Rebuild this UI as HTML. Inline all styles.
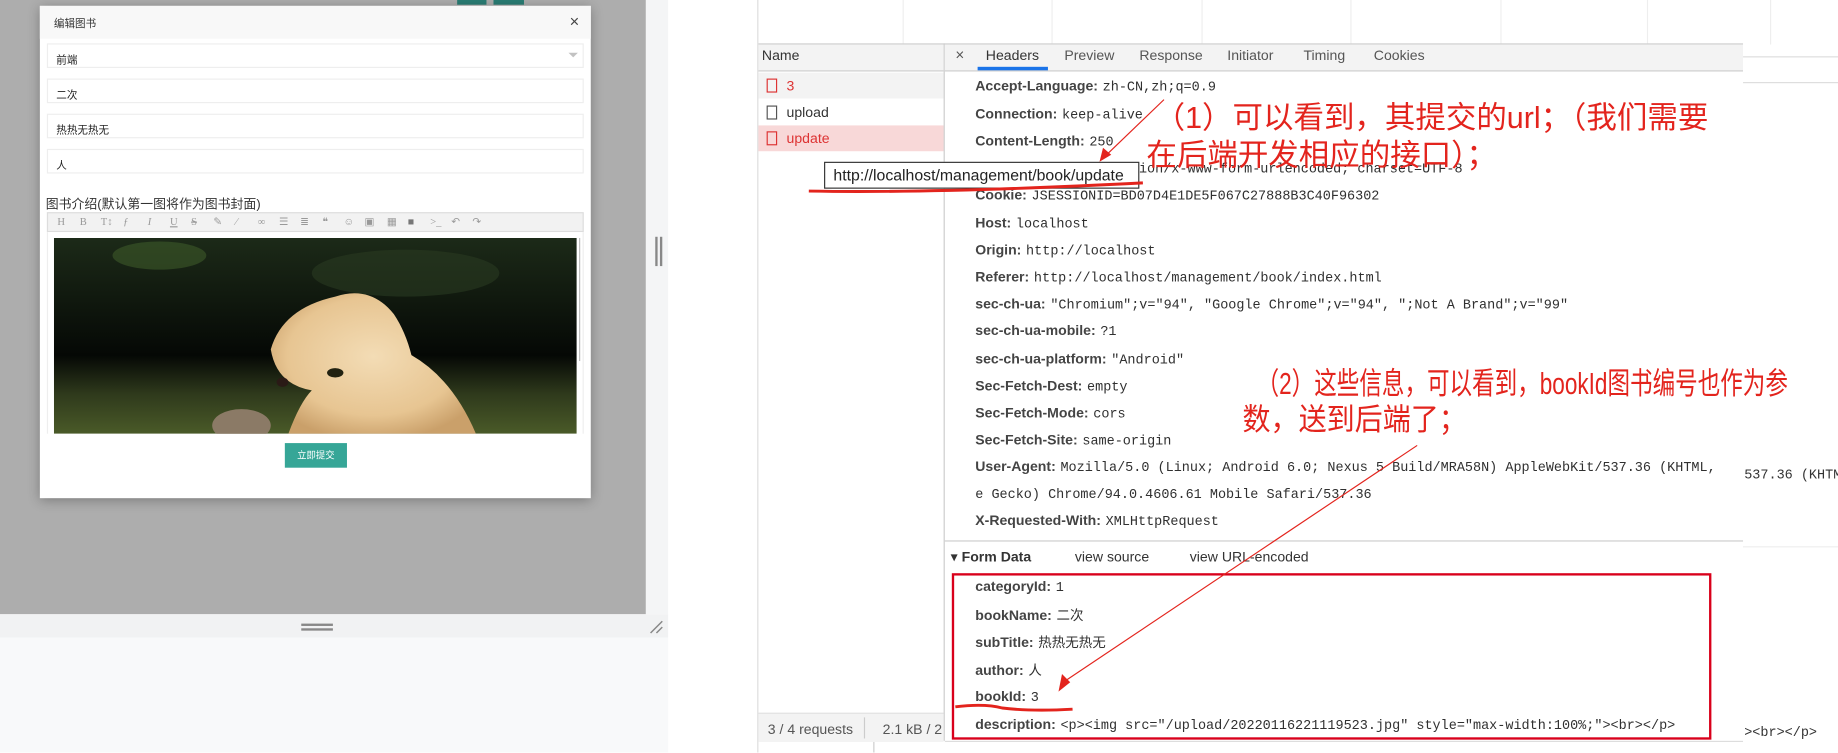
<!DOCTYPE html>
<html><head><meta charset="utf-8">
<style>
*{margin:0;padding:0;box-sizing:border-box}
html,body{width:1838px;height:753px;overflow:hidden;background:#fff}
#w{position:absolute;left:0;top:0;width:1568px;height:642px;transform:scale(1.17219);transform-origin:0 0;font-family:"Liberation Sans","Noto Sans CJK SC",sans-serif;overflow:hidden;background:#fff}
.a{position:absolute}
.t{position:absolute;white-space:nowrap}
.inp{position:absolute;left:40px;width:458px;height:21px;background:#fff;border:1px solid #eee;font-size:9px;color:#222;padding:6px 0 0 7px}
.hl{position:absolute;left:832px;font-size:12px;white-space:nowrap;color:#303030}
.hl b{font-weight:bold;color:#444}
.hl span{font-family:"Liberation Mono","Noto Sans CJK SC",monospace;font-size:11.5px;margin-left:4px}
.red{color:#e3241d;font-family:"Liberation Sans","Noto Sans CJK SC",sans-serif;font-size:26px;position:absolute;white-space:nowrap;transform-origin:0 0}
.tb{position:absolute;top:184px;font-size:9px;color:#999;font-family:"Liberation Serif",serif}
</style></head><body><div id="w">
<div class="a" style="left:0;top:0;width:551px;height:524px;background:#adadad"></div>
<div class="a" style="left:390px;top:0;width:25px;height:4px;background:#2a7d74"></div>
<div class="a" style="left:421px;top:0;width:26px;height:4px;background:#2a7d74"></div>
<div class="a" style="left:0;top:524px;width:570px;height:20px;background:#f1f2f3"></div>
<div class="a" style="left:551px;top:0;width:19px;height:524px;background:#f4f5f6"></div>
<div class="a" style="left:257px;top:532px;width:27px;height:1.5px;background:#888"></div>
<div class="a" style="left:257px;top:536px;width:27px;height:1.5px;background:#888"></div>
<div class="a" style="left:559px;top:202px;width:1.5px;height:25px;background:#888"></div>
<div class="a" style="left:563px;top:202px;width:1.5px;height:25px;background:#888"></div>
<svg class="a" style="left:553px;top:528px" width="14" height="14"><path d="M2 12L12 2M7 12L12 7" stroke="#888" stroke-width="1.3"/></svg>
<div class="a" style="left:0;top:544px;width:570px;height:98px;background:#f8f9fa"></div>
<div class="a" style="left:34px;top:5px;width:470px;height:420px;background:#fff;box-shadow:0 2px 10px rgba(0,0,0,.3)"></div>
<div class="a" style="left:34px;top:5px;width:470px;height:28px;background:#f8f8f8"></div>
<div class="t" style="left:46px;top:13px;font-size:9px;color:#333">编辑图书</div>
<div class="t" style="left:486px;top:10px;font-size:14px;color:#444">×</div>
<div class="inp" style="top:37px">前端</div>
<div class="a" style="left:485px;top:45px;border:4px solid transparent;border-top:4px solid #c2c2c2"></div>
<div class="inp" style="top:67px">二次</div>
<div class="inp" style="top:97px">热热无热无</div>
<div class="inp" style="top:127px">人</div>
<div class="t" style="left:39px;top:166px;font-size:11px;color:#333">图书介绍(默认第一图将作为图书封面)</div>
<div class="a" style="left:40px;top:181px;width:458px;height:17px;background:#f2f2f2;border:1px solid #ddd"></div>
<div class="tb" style="left:49px">H</div><div class="tb" style="left:68px">B</div><div class="tb" style="left:86px">T↕</div><div class="tb" style="left:105px;font-style:italic">ƒ</div><div class="tb" style="left:126px;font-style:italic">I</div><div class="tb" style="left:145px;text-decoration:underline">U</div><div class="tb" style="left:163px;text-decoration:line-through">S</div><div class="tb" style="left:182px">✎</div><div class="tb" style="left:201px">⁄</div><div class="tb" style="left:220px">∞</div><div class="tb" style="left:238px">☰</div><div class="tb" style="left:256px">≣</div><div class="tb" style="left:275px">❝</div><div class="tb" style="left:293px">☺</div><div class="tb" style="left:311px">▣</div><div class="tb" style="left:330px">▦</div><div class="tb" style="left:348px;color:#777">■</div><div class="tb" style="left:367px">&gt;_</div><div class="tb" style="left:385px">↶</div><div class="tb" style="left:403px">↷</div>
<div class="a" style="left:40px;top:198px;width:458px;height:172px;background:#fff;border-left:1px solid #eee;border-right:1px solid #eee"></div>
<div class="a" style="left:494px;top:203px;width:1px;height:105px;background:#bbb"></div>
<svg class="a" style="left:46px;top:203px" width="446" height="167">
<defs><linearGradient id="g" x1="0" y1="0" x2="0" y2="1"><stop offset="0" stop-color="#1c2a18"/><stop offset=".6" stop-color="#050805"/><stop offset=".8" stop-color="#2f3a1c"/><stop offset="1" stop-color="#4a5a28"/></linearGradient>
<radialGradient id="d" cx=".5" cy=".45" r=".6"><stop offset="0" stop-color="#f3dcb5"/><stop offset=".7" stop-color="#e7c592"/><stop offset="1" stop-color="#caa06a"/></radialGradient></defs>
<rect width="446" height="167" fill="url(#g)"/>
<ellipse cx="90" cy="15" rx="40" ry="12" fill="#3d5a2a" opacity=".6"/>
<ellipse cx="300" cy="30" rx="80" ry="20" fill="#2a3a22" opacity=".6"/>
<path d="M185 95 Q195 60 240 50 Q270 40 290 65 Q300 80 305 100 Q340 120 360 167 L200 167 Q210 140 220 130 Q190 125 185 95Z" fill="url(#d)"/>
<ellipse cx="240" cy="115" rx="7" ry="4" fill="#221"/>
<ellipse cx="195" cy="123" rx="5" ry="4" fill="#2a1a16"/>
<ellipse cx="160" cy="160" rx="25" ry="14" fill="#8b7a66"/>
</svg>
<div class="t" style="left:243px;top:378px;width:53px;height:21px;background:#36a697;color:#fff;font-size:8px;text-align:center;line-height:21px">立即提交</div>
<div class="a" style="left:646px;top:0;width:1px;height:642px;background:#ddd"></div>
<div class="a" style="left:770px;top:0;width:1px;height:37px;background:#eee"></div>
<div class="a" style="left:897px;top:0;width:1px;height:37px;background:#eee"></div>
<div class="a" style="left:1025px;top:0;width:1px;height:37px;background:#eee"></div>
<div class="a" style="left:1152px;top:0;width:1px;height:37px;background:#eee"></div>
<div class="a" style="left:1280px;top:0;width:1px;height:37px;background:#eee"></div>
<div class="a" style="left:1405px;top:0;width:1px;height:37px;background:#eee"></div>
<div class="a" style="left:1510px;top:0;width:1px;height:48px;background:#eee"></div>
<div class="a" style="left:647px;top:37px;width:840px;height:1px;background:#ccc"></div>
<div class="a" style="left:647px;top:38px;width:158px;height:22px;background:#f3f3f3"></div>
<div class="t" style="left:650px;top:40px;font-size:12px;color:#333">Name</div>
<div class="a" style="left:647px;top:60px;width:158px;height:1px;background:#ccc"></div>
<div class="a" style="left:647px;top:62px;width:158px;height:22px;background:#f3f3f3"></div>
<div class="a" style="left:647px;top:107px;width:158px;height:22px;background:#f8d8d8"></div>
<div class="a" style="left:654px;top:67px;width:9px;height:12px;border:1px solid #d33"></div>
<div class="t" style="left:671px;top:66px;font-size:12px;color:#d33">3</div>
<div class="a" style="left:654px;top:90px;width:9px;height:12px;border:1px solid #555"></div>
<div class="t" style="left:671px;top:89px;font-size:12px;color:#333">upload</div>
<div class="a" style="left:654px;top:112px;width:9px;height:12px;border:1px solid #d33"></div>
<div class="t" style="left:671px;top:111px;font-size:12px;color:#d33">update</div>
<div class="a" style="left:805px;top:37px;width:1px;height:595px;background:#ccc"></div>
<div class="a" style="left:806px;top:38px;width:681px;height:22px;background:#f3f3f3"></div>
<div class="a" style="left:806px;top:60px;width:681px;height:1px;background:#ccc"></div>
<div class="t" style="left:815px;top:39px;font-size:13px;color:#555">×</div>
<div class="t" style="left:841px;top:40px;font-size:12px;color:#333">Headers</div>
<div class="a" style="left:834px;top:57px;width:60px;height:3px;background:#1a73e8"></div>
<div class="t" style="left:908px;top:40px;font-size:12px;color:#555">Preview</div>
<div class="t" style="left:972px;top:40px;font-size:12px;color:#555">Response</div>
<div class="t" style="left:1047px;top:40px;font-size:12px;color:#555">Initiator</div>
<div class="t" style="left:1112px;top:40px;font-size:12px;color:#555">Timing</div>
<div class="t" style="left:1172px;top:40px;font-size:12px;color:#555">Cookies</div>
<div class="hl" style="top:66px"><b>Accept-Language:</b><span>zh-CN,zh;q=0.9</span></div>
<div class="hl" style="top:90px"><b>Connection:</b><span>keep-alive</span></div>
<div class="hl" style="top:113px"><b>Content-Length:</b><span>250</span></div>
<div class="hl" style="top:136px"><b>Content-Type:</b><span>application/x-www-form-urlencoded; charset=UTF-8</span></div>
<div class="hl" style="top:159px"><b>Cookie:</b><span>JSESSIONID=BD07D4E1DE5F067C27888B3C40F96302</span></div>
<div class="hl" style="top:183px"><b>Host:</b><span>localhost</span></div>
<div class="hl" style="top:206px"><b>Origin:</b><span>http://localhost</span></div>
<div class="hl" style="top:229px"><b>Referer:</b><span>http://localhost/management/book/index.html</span></div>
<div class="hl" style="top:252px"><b>sec-ch-ua:</b><span>"Chromium";v="94", "Google Chrome";v="94", ";Not A Brand";v="99"</span></div>
<div class="hl" style="top:275px"><b>sec-ch-ua-mobile:</b><span>?1</span></div>
<div class="hl" style="top:299px"><b>sec-ch-ua-platform:</b><span>"Android"</span></div>
<div class="hl" style="top:322px"><b>Sec-Fetch-Dest:</b><span>empty</span></div>
<div class="hl" style="top:345px"><b>Sec-Fetch-Mode:</b><span>cors</span></div>
<div class="hl" style="top:368px"><b>Sec-Fetch-Site:</b><span>same-origin</span></div>
<div class="hl" style="top:391px"><b>User-Agent:</b><span>Mozilla/5.0 (Linux; Android 6.0; Nexus 5 Build/MRA58N) AppleWebKit/537.36 (KHTML,</span></div>
<div class="hl" style="top:414px"><span style="margin:0">e Gecko) Chrome/94.0.4606.61 Mobile Safari/537.36</span></div>
<div class="hl" style="top:437px"><b>X-Requested-With:</b><span>XMLHttpRequest</span></div>
<div class="a" style="left:1487px;top:38px;width:81px;height:604px;background:#fff"></div>
<div class="a" style="left:1487px;top:48px;width:81px;height:1px;background:#ddd"></div>
<div class="a" style="left:1487px;top:70px;width:81px;height:1px;background:#ddd"></div>
<div class="a" style="left:1487px;top:466px;width:81px;height:1px;background:#eee"></div>
<div class="t" style="left:1488px;top:399px;font-size:11.5px;font-family:'Liberation Mono',monospace;color:#333">537.36 (KHTM</div>
<div class="t" style="left:1488px;top:619px;font-size:11.5px;font-family:'Liberation Mono',monospace;color:#333">&gt;&lt;br&gt;&lt;/p&gt;</div>
<div class="a" style="left:806px;top:461px;width:681px;height:1px;background:#ccc"></div>
<div class="t" style="left:811px;top:468px;font-size:12px;color:#333">▾ <b>Form Data</b></div>
<div class="t" style="left:917px;top:468px;font-size:12px;color:#333">view source</div>
<div class="t" style="left:1015px;top:468px;font-size:12px;color:#333">view URL-encoded</div>
<div class="hl" style="top:493px"><b>categoryId:</b><span>1</span></div>
<div class="hl" style="top:517px"><b>bookName:</b><span>二次</span></div>
<div class="hl" style="top:540px"><b>subTitle:</b><span>热热无热无</span></div>
<div class="hl" style="top:564px"><b>author:</b><span>人</span></div>
<div class="hl" style="top:587px"><b>bookId:</b><span>3</span></div>
<div class="hl" style="top:611px"><b>description:</b><span>&lt;p&gt;&lt;img src="/upload/20220116221119523.jpg" style="max-width:100%;"&gt;&lt;br&gt;&lt;/p&gt;</span></div>
<div class="a" style="left:812px;top:489px;width:648px;height:142px;border:2px solid #d9001b"></div>
<div class="a" style="left:647px;top:608px;width:158px;height:1px;background:#ddd"></div>
<div class="a" style="left:647px;top:609px;width:158px;height:24px;background:#f3f3f3"></div>
<div class="t" style="left:655px;top:615px;font-size:12px;color:#555">3 / 4 requests</div>
<div class="a" style="left:737px;top:612px;width:1px;height:18px;background:#ccc"></div>
<div class="t" style="left:753px;top:615px;font-size:12px;color:#555">2.1 kB / 2</div>
<div class="a" style="left:806px;top:632px;width:681px;height:1px;background:#ddd"></div>
<div class="a" style="left:745px;top:633px;width:1px;height:9px;background:#ccc"></div>
<div class="t" style="left:703px;top:138px;width:269px;height:23px;background:#fff;border:1px solid #333;font-size:13.5px;color:#222;padding:3px 0 0 7px">http://localhost/management/book/update</div>
<div class="red" style="left:985px;top:80px">（1）可以看到，其提交的url；（我们需要</div>
<div class="red" style="left:978px;top:112px">在后端开发相应的接口）；</div>
<div class="red" style="left:1072px;top:307px;transform:scaleX(0.74)">（2）这些信息，可以看到，bookId图书编号也作为参</div>
<div class="red" style="left:1060px;top:338px;transform:scaleX(0.92)">数，送到后端了；</div>
<svg class="a" style="left:0;top:0" width="1568" height="642">
<g stroke="#e3241d" fill="#e3241d">
<line x1="993" y1="85" x2="943" y2="133" stroke-width="1"/>
<path d="M938 138L941 126L948 132Z" stroke="none"/>
<path d="M690 163Q800 165 975 156" stroke-width="2.5" fill="none"/>
<line x1="1209" y1="380" x2="907" y2="582" stroke-width="1"/>
<path d="M903 590L906 575L913 582Z" stroke="none"/>
<path d="M815 603Q840 600 855 604Q880 607 915 605" stroke-width="2.5" fill="none"/>
</g></svg>
</div></body></html>
